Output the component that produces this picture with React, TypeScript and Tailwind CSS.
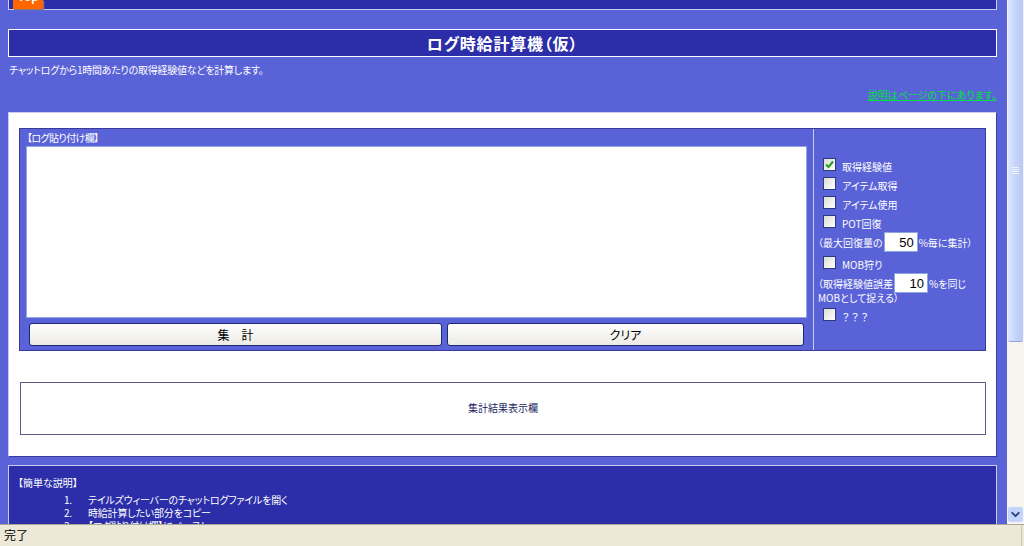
// App.tsx
import React from "react";
import { ChevronDown } from "lucide-react";

const font = "font-['Noto_Sans_CJK_JP','Liberation_Sans',sans-serif] [font-feature-settings:'palt']";

const CheckBox: React.FC<{ checked?: boolean }> = ({ checked }) => (
  <span className="flex h-[13px] w-[13px] shrink-0 items-center justify-center border border-[#2b3a80] bg-gradient-to-br from-[#dcdcd6] to-white">
    {checked && (
      <svg width="9" height="9" viewBox="0 0 9 9">
        <path d="M1 4.5 L3.5 7 L8 1.5" fill="none" stroke="#21a121" strokeWidth="2" />
      </svg>
    )}
  </span>
);

const CheckRow: React.FC<{ label: string; checked?: boolean }> = ({ label, checked }) => (
  <div className="flex h-[19px] items-center pl-[9px]">
    <CheckBox checked={checked} />
    <span className="ml-[6px] mt-[5px] text-[10px] leading-none text-white">{label}</span>
  </div>
);

const NumInput: React.FC<{ value: string; width: string }> = ({ value, width }) => (
  <input
    readOnly
    value={value}
    className={`${width} mx-px h-[20px] border border-[#8ea6e0] bg-white pr-[3px] text-right font-['Liberation_Sans',sans-serif] text-[13px] text-black outline-none`}
  />
);

const steps = [
  "テイルズウィーバーのチャットログファイルを開く",
  "時給計算したい部分をコピー",
  "【ログ貼り付け欄】にペースト",
];

export default function App() {
  return (
    <div className={`flex h-[546px] w-[1024px] flex-col overflow-hidden bg-[#5a62d8] ${font}`}>
      <div className="flex h-[524px]">
        {/* Page */}
        <main className="w-[1007px] overflow-hidden pl-2 pr-[10px]">
          {/* Nav box, scrolled off */}
          <div className="h-[10px] border-b border-r border-l border-[#c9cbf0] bg-[#2b2ea8] pl-[4px]">
            <div className="flex h-[9px] w-[30px] items-end justify-center overflow-hidden bg-[#ff6600] pb-[6px] shadow-[1px_1px_1px_#8a7a80] text-[12px] leading-none font-bold text-white">
              <span className="font-['Liberation_Sans',sans-serif]">Top</span>
            </div>
          </div>

          <h1 className="mt-[19px] flex h-[28px] items-center justify-center border border-white bg-[#2b2ea8] text-[16px] font-bold leading-none tracking-[0.8px] text-white">
            ログ時給計算機（仮）
          </h1>

          <p className="mt-[6px] ml-[1px] h-[14px] text-[10px] leading-[14px] tracking-[-0.25px] text-white">
            チャットログから1時間あたりの取得経験値などを計算します。
          </p>

          <p className="mt-[11px] h-[14px] text-right text-[10px] leading-[14px]">
            <a className="text-[#00e040] underline">説明はページの下にあります。</a>
          </p>

          {/* Tool panel */}
          <section className="mt-[10px] h-[345px] border border-[#c9cbf0] border-b-[#3a3aa0] border-r-[#3a3aa0] bg-white pl-[10px] pr-[10px] pt-[15px]">
            <div className="flex h-[223px] w-[967px] border border-[#3a3a9a] bg-[#5a62d8]">
              <div className="flex w-[794px] flex-col border-r border-[#c9cbf0] pl-[6px]">
                <div className="ml-px h-[17px] text-[10px] leading-[17px] tracking-[-0.6px] text-white">【ログ貼り付け欄】</div>
                <textarea
                  readOnly
                  className="h-[172px] w-[781px] resize-none border border-[#8ea6e0] bg-white outline-none"
                />
                <div className="mt-[5px] flex gap-[5px] pl-[3px]">
                  <button type="button" className="h-[23px] w-[413px] rounded-[3px] border border-[#1c2a70] bg-gradient-to-b from-white to-[#ecebe4] text-[12px] text-black">
                    集　計
                  </button>
                  <button type="button" className="h-[23px] w-[357px] rounded-[3px] border border-[#1c2a70] bg-gradient-to-b from-white to-[#ecebe4] text-[12px] text-black">
                    クリア
                  </button>
                </div>
              </div>

              <div className="w-[171px] pt-[26px] text-[10px] text-white">
                <CheckRow label="取得経験値" checked />
                <CheckRow label="アイテム取得" />
                <CheckRow label="アイテム使用" />
                <CheckRow label="POT回復" />
                <div className="mt-[1px] flex h-[20px] items-center pl-[4px] whitespace-nowrap">
                  （最大回復量の<NumInput value="50" width="w-[34px]" />%毎に集計）
                </div>
                <div className="mb-[1px] mt-[1px]">
                  <CheckRow label="MOB狩り" />
                </div>
                <div className="flex h-[20px] items-center pl-[4px] whitespace-nowrap">
                  （取得経験値誤差<NumInput value="10" width="w-[34px]" />%を同じ
                </div>
                <div className="h-[12px] pl-[4px] leading-[10px]">MOBとして捉える）</div>
                <CheckRow label="？ ？ ？" />
              </div>
            </div>

            <div className="ml-px mt-[31px] flex h-[53px] w-[966px] items-center justify-center border border-[#5a5a88] pb-[2px] text-[10px] text-[#1c1c60]">
              集計結果表示欄
            </div>
          </section>

          {/* Help box */}
          <section className="mt-[8px] h-[70px] border border-[#c9cbf0] bg-[#2b2ea8] pl-[9px] pt-[10px] text-[10px] text-white">
            <p className="h-[13px] leading-[13px]">【簡単な説明】</p>
            <ol className="mt-[4px] tracking-[-0.2px]">
              {steps.map((s, i) => (
                <li key={s} className="flex h-[13px] leading-[13px]">
                  <span className="ml-[46px] w-[24px]">{i + 1}.</span>
                  <span>{s}</span>
                </li>
              ))}
            </ol>
          </section>
        </main>

        {/* Scrollbar */}
        <div className="flex w-[17px] flex-col bg-[#f6f5ef] pl-px">
          <div className="flex h-[342px] w-[15px] items-center justify-center rounded-b-[2px] border-b border-[#8fa6dc] bg-gradient-to-r from-[#dfe7fd] via-[#c5d4fb] to-[#b6c8f8]">
            <div className="flex h-[7px] w-[7px] flex-col justify-between">
              <span className="h-px bg-[#eef2fe]" />
              <span className="h-px bg-[#eef2fe]" />
              <span className="h-px bg-[#eef2fe]" />
              <span className="h-px bg-[#eef2fe]" />
            </div>
          </div>
          <div className="flex-1" />
          <div className="mb-[2px] flex h-[15px] w-[15px] items-center justify-center rounded-[2px] bg-[#c5d4fb]">
            <ChevronDown className="h-[13px] w-[13px] text-[#2a3f80]" strokeWidth={3.5} />
          </div>
        </div>
      </div>

      {/* Status bar */}
      <footer className="flex h-[22px] items-center justify-between border-t border-[#aca899] bg-[#ece9d8] pl-[4px] text-[12px] text-black">
        <span className="pb-[2px]">完了</span>
        <span className="mr-[2px] h-full w-px bg-[#c9c6b4]" />
      </footer>
    </div>
  );
}
